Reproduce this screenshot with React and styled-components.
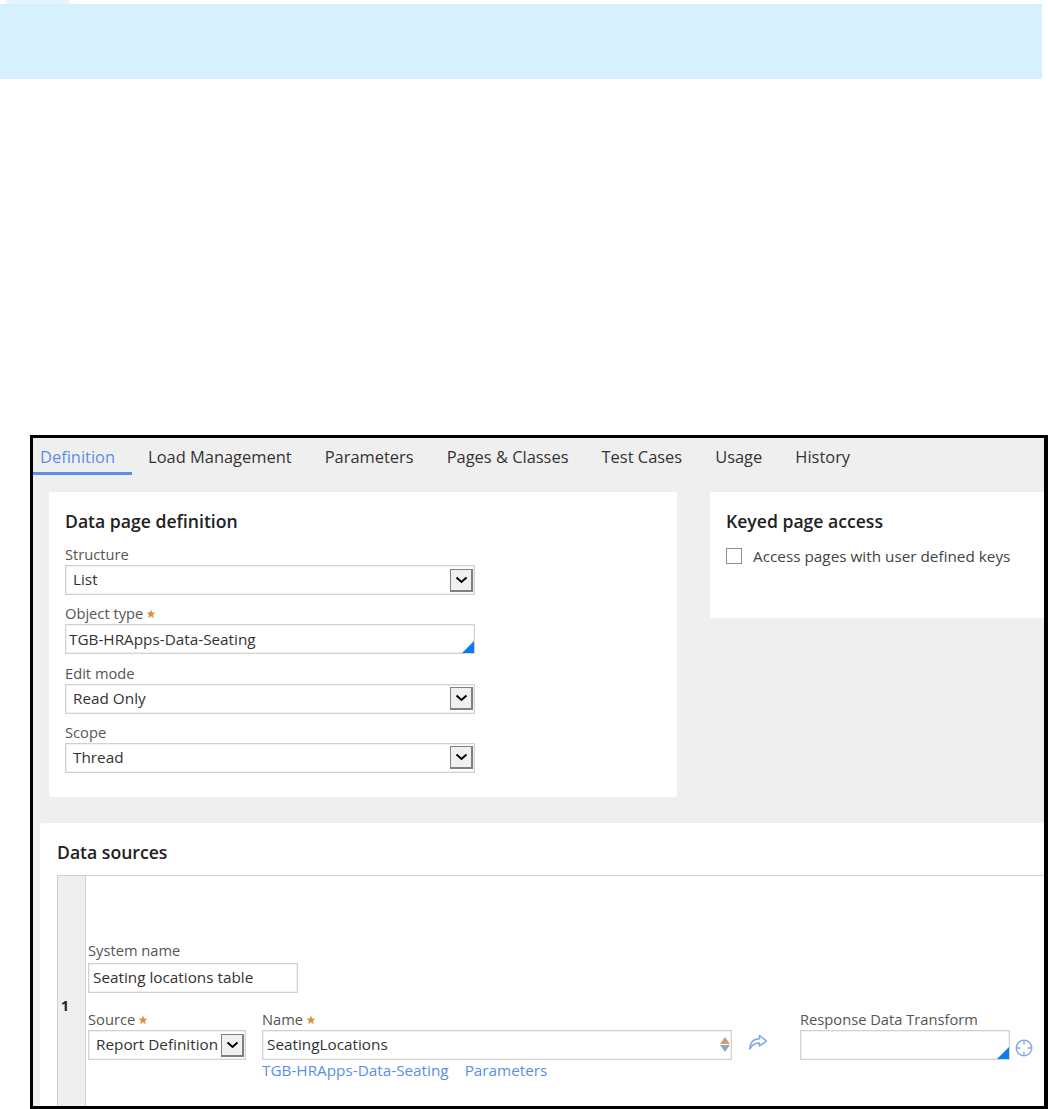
import React from "react";
import styled, { createGlobalStyle } from "styled-components";

const GlobalStyle = createGlobalStyle`
  html, body {
    margin: 0;
    padding: 0;
    background: #fff;
  }
  body {
    font-family: "Open Sans", "Liberation Sans", sans-serif;
    color: #333;
  }
`;

const Page = styled.div`
  width: 1048px;
  height: 1109px;
  overflow: hidden;
`;

const BannerTab = styled.div`
  width: 63px;
  height: 4px;
  margin-left: 6px;
  background: #e3f5ff;
`;

const Banner = styled.div`
  width: 1042px;
  height: 75px;
  background: #d6f0fe;
`;

const Frame = styled.div`
  box-sizing: border-box;
  width: 1018px;
  height: 674px;
  margin: 356px 0 0 30px;
  border: 3px solid #000;
  border-right-width: 4px;
  background: #efefef;
  overflow: hidden;
`;

const Tabs = styled.div`
  display: flex;
  height: 37px;
`;

const Tab = styled.div`
  box-sizing: border-box;
  height: 37px;
  padding: 9px 16.5px 0;
  font-size: 16.45px;
  line-height: 20px;
  white-space: nowrap;
  color: ${(p) => (p.$active ? "#5c8ee6" : "#333")};
  border-bottom: 3px solid ${(p) => (p.$active ? "#5c8ee6" : "transparent")};

  &:first-child {
    padding-left: 7px;
  }
`;

const CardRow = styled.div`
  display: flex;
  align-items: flex-start;
  gap: 33px;
  margin: 17px 0 0 16px;
`;

const Card = styled.div`
  box-sizing: border-box;
  flex: none;
  width: ${(p) => p.$width}px;
  height: ${(p) => p.$height}px;
  padding: 19px 16px 0;
  background: #fff;
  border-radius: 2px;
`;

const CardTitle = styled.h2`
  margin: 0 0 15px;
  font-size: 17.6px;
  line-height: 20px;
  font-weight: 600;
  color: #222;
`;

const Field = styled.div`
  margin-bottom: 10.33px;
`;

const Label = styled.div`
  box-sizing: border-box;
  display: flex;
  align-items: center;
  gap: 3px;
  height: 19px;
  padding-bottom: 2px;
  font-size: 14.7px;
  line-height: 17px;
  color: #555;
  white-space: nowrap;
`;

const SystemLabel = styled(Label)`
  margin-bottom: 2px;
`;

const Star = ({ className }) => (
  <svg className={className} width="10" height="10" viewBox="0 0 10 10">
    <path fill="#d9923f" d="M5 0.4 6.2 3.6 9.6 3.7 6.9 5.8 7.9 9.2 5 7.2 2.1 9.2 3.1 5.8 0.4 3.7 3.8 3.6z" />
  </svg>
);

const Control = styled.div`
  position: relative;
  box-sizing: border-box;
  display: flex;
  align-items: center;
  justify-content: space-between;
  width: ${(p) => p.$width}px;
  height: 30px;
  padding: 0 ${(p) => (p.$select ? 1 : 4)}px 0 ${(p) => (p.$select ? 7 : p.$inset || 3)}px;
  border: 1px solid #d2d2d2;
  box-shadow: inset 0 0 0 0.5px #e4e4e4;
  background: #fff;
  font-size: 15.3px;
  color: #333;
  white-space: nowrap;
`;

const ControlText = styled.span`
  margin-top: ${(p) => (p.$raised ? "-2px" : "0")};
`;

const ArrowButton = styled.span`
  box-sizing: border-box;
  flex: none;
  display: flex;
  align-items: center;
  justify-content: center;
  width: 23px;
  height: 23px;
  border: 1px solid #808080;
  border-right-width: 2px;
  border-bottom-width: 2px;
  background: #f0f0f0;
`;

const Chevron = () => (
  <ArrowButton>
    <svg width="13" height="8" viewBox="0 0 13 8">
      <path d="M1.5 1.5 6.5 6 11.5 1.5" fill="none" stroke="#000" strokeWidth="2" />
    </svg>
  </ArrowButton>
);

const Corner = styled.span`
  position: absolute;
  right: 0;
  bottom: 0;
  width: 0;
  height: 0;
  border-style: solid;
  border-width: 0 0 12px 12px;
  border-color: transparent transparent #0a7cf5 transparent;
`;

const CheckRow = styled.div`
  display: flex;
  align-items: center;
  gap: 11px;
  margin-top: 1px;
  font-size: 15.3px;
  line-height: 20px;
  color: #444;
`;

const Checkbox = styled.span`
  box-sizing: border-box;
  width: 16px;
  height: 16px;
  border: 1px solid #8f8f8f;
  background: #fff;
`;

const DataCard = styled.div`
  box-sizing: border-box;
  height: 300px;
  margin: 26px 0 0 7px;
  padding: 19px 0 0 17px;
  background: #fff;
  border-radius: 2px;
`;

const DataTitle = styled(CardTitle)`
  margin-bottom: 13px;
`;

const SourceTable = styled.div`
  display: flex;
  height: 260px;
  border-top: 1px solid #cfcfcf;
`;

const RowNumber = styled.div`
  box-sizing: border-box;
  flex: none;
  display: flex;
  align-items: center;
  width: 29px;
  padding: 0 0 2px 3px;
  background: #efefef;
  border-left: 1px solid #cfcfcf;
  border-right: 1px solid #cfcfcf;
  font-size: 14px;
  font-weight: 700;
  color: #222;
`;

const RowBody = styled.div`
  padding: 66px 0 0 2px;
`;

const SourceFields = styled.div`
  display: flex;
  align-items: flex-start;
  margin-top: 18px;
`;

const NameField = styled.div`
  margin-left: 16px;
`;

const Links = styled.div`
  display: flex;
  gap: 16px;
  margin-top: 1px;
  font-size: 15.3px;
  line-height: 18px;
  color: #5c8ee6;
`;

const ResponseField = styled.div`
  margin-left: 32px;
`;

const IconSlot = styled.span`
  flex: none;
  display: flex;
  margin: ${(p) => p.$margin};
`;

const Stepper = styled.span`
  position: absolute;
  right: 1px;
  top: 6px;
  display: flex;
  flex-direction: column;
  gap: 1px;
`;

const Triangle = styled.span`
  width: 0;
  height: 0;
  border-left: 5px solid transparent;
  border-right: 5px solid transparent;
  ${(p) =>
    p.$down
      ? "border-top: 7px solid #8fa9bd;"
      : "border-bottom: 7px solid #cf9d78;"}
`;

const ShareIcon = () => (
  <svg width="20" height="17" viewBox="0 0 20 17">
    <path
      d="M11.5 1.5 18.5 7 11.5 12V9C7 9 4 10.5 2 15 1.5 9 5 5 11.5 4.8z"
      fill="#fff"
      stroke="#7ea6e6"
      strokeWidth="1.5"
      strokeLinejoin="round"
    />
  </svg>
);

const TargetIcon = () => (
  <svg width="18" height="18" viewBox="0 0 18 18">
    <g fill="none" stroke="#7ea6e6" strokeWidth="1.3">
      <circle cx="9" cy="9" r="7.8" />
      <path d="M9 1.5V5.5M9 12.5V16.5M1.5 9H5.5M12.5 9H16.5" />
    </g>
  </svg>
);

const tabs = [
  "Definition",
  "Load Management",
  "Parameters",
  "Pages & Classes",
  "Test Cases",
  "Usage",
  "History",
];

const selects = [
  { label: "Structure", value: "List" },
  { label: "Object type", value: "TGB-HRApps-Data-Seating", required: true, lookup: true },
  { label: "Edit mode", value: "Read Only" },
  { label: "Scope", value: "Thread" },
];

export default function App() {
  return (
    <Page>
      <GlobalStyle />
      <BannerTab />
      <Banner />
      <Frame>
        <Tabs>
          {tabs.map((tab, i) => (
            <Tab key={tab} $active={i === 0}>
              {tab}
            </Tab>
          ))}
        </Tabs>
        <CardRow>
          <Card $width={628} $height={305}>
            <CardTitle>Data page definition</CardTitle>
            {selects.map((f) => (
              <Field key={f.label}>
                <Label>
                  {f.label}
                  {f.required && <Star />}
                </Label>
                {f.lookup ? (
                  <Control $width={410}>
                    {f.value}
                    <Corner />
                  </Control>
                ) : (
                  <Control $width={410} $select>
                    <ControlText $raised>{f.value}</ControlText>
                    <Chevron />
                  </Control>
                )}
              </Field>
            ))}
          </Card>
          <Card $width={340} $height={126}>
            <CardTitle>Keyed page access</CardTitle>
            <CheckRow>
              <Checkbox />
              Access pages with user defined keys
            </CheckRow>
          </Card>
        </CardRow>
        <DataCard>
          <DataTitle>Data sources</DataTitle>
          <SourceTable>
            <RowNumber>1</RowNumber>
            <RowBody>
              <SystemLabel>System name</SystemLabel>
              <Control $width={210} $inset={4}>
                <ControlText $raised>Seating locations table</ControlText>
              </Control>
              <SourceFields>
                <div>
                  <Label>
                    Source
                    <Star />
                  </Label>
                  <Control $width={158} $select>
                    <ControlText $raised>Report Definition</ControlText>
                    <Chevron />
                  </Control>
                </div>
                <NameField>
                  <Label>
                    Name
                    <Star />
                  </Label>
                  <Control $width={470} $inset={4}>
                    <ControlText $raised>SeatingLocations</ControlText>
                    <Stepper>
                      <Triangle />
                      <Triangle $down />
                    </Stepper>
                  </Control>
                  <Links>
                    <span>TGB-HRApps-Data-Seating</span>
                    <span>Parameters</span>
                  </Links>
                </NameField>
                <IconSlot $margin="23px 0 0 16px">
                  <ShareIcon />
                </IconSlot>
                <ResponseField>
                  <Label>Response Data Transform</Label>
                  <Control $width={210}>
                    <Corner />
                  </Control>
                </ResponseField>
                <IconSlot $margin="28px 0 0 5px">
                  <TargetIcon />
                </IconSlot>
              </SourceFields>
            </RowBody>
          </SourceTable>
        </DataCard>
      </Frame>
    </Page>
  );
}
